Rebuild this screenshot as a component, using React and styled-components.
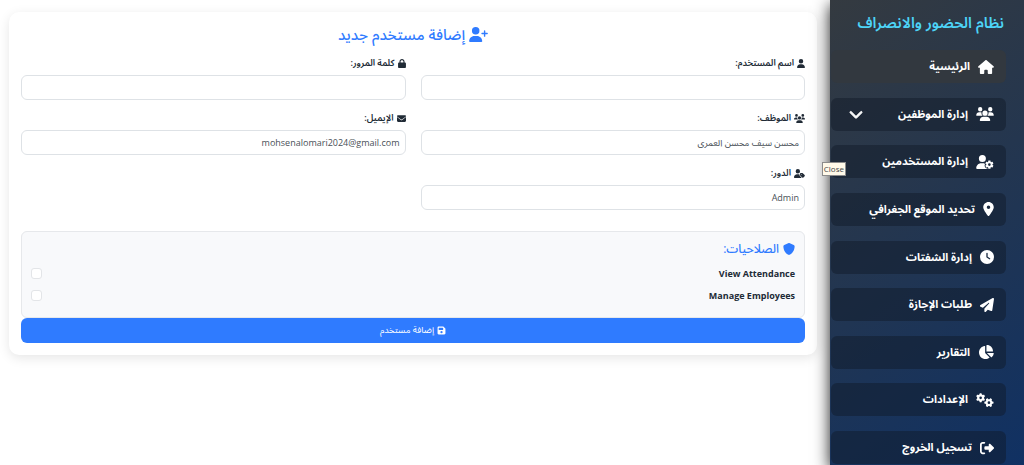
import React, { useState } from 'react';
import styled, { createGlobalStyle } from 'styled-components';
import {
  FaChartPie,
  FaChevronDown,
  FaClock,
  FaEnvelope,
  FaFloppyDisk,
  FaGears,
  FaHouse,
  FaLocationDot,
  FaLock,
  FaPaperPlane,
  FaRightFromBracket,
  FaShield,
  FaUser,
  FaUserGear,
  FaUserPlus,
  FaUserTag,
  FaUsers,
} from 'react-icons/fa6';

const GlobalStyle = createGlobalStyle`
  *, *::before, *::after {
    box-sizing: border-box;
  }

  body {
    margin: 0;
    background: #fff;
    color: #212b36;
    font-family: 'Open Sans', 'Noto Sans', 'Noto Sans Arabic', 'DejaVu Sans', sans-serif;
    font-size: 9px;
  }

  button, input, select {
    font-family: inherit;
  }
`;

const Page = styled.div`
  display: flex;
  min-height: 100vh;
  overflow: hidden;
`;

const IconBox = styled.span`
  display: flex;
  flex: none;
  width: ${({ $width }) => $width}px;
  height: ${({ $height }) => $height}px;

  svg {
    width: 100%;
    height: 100%;
  }
`;

const Sidebar = styled.aside`
  position: relative;
  display: flex;
  flex-direction: column;
  flex: 0 0 194px;
  min-width: 0;
  min-height: 100vh;
  padding: 0 18px 1px 1px;
  background: linear-gradient(145deg, #343a40 0%, #24364f 45%, #103163 100%);
  box-shadow: 0 5px 15px rgba(0, 0, 0, 0.9);
`;

const Brand = styled.h1`
  margin: 0 -18px 0 0;
  padding: 0 20px;
  color: #4dd4f7;
  font-size: 15px;
  font-weight: 600;
  line-height: 44px;
  white-space: nowrap;
`;

const Nav = styled.nav`
  display: flex;
  flex: 1;
  flex-direction: column;
  justify-content: space-between;
  padding-top: 6px;
`;

const NavLink = styled.a`
  display: flex;
  align-items: center;
  gap: 8px;
  height: 33px;
  padding: 0 12px;
  border-radius: 6px;
  background: ${({ $active }) => ($active ? '#32383f' : 'rgba(16, 24, 38, 0.45)')};
  color: #fff;
  font-size: 11px;
  font-weight: 700;
  text-decoration: none;
  white-space: nowrap;
`;

const NavArrow = styled(FaChevronDown)`
  width: 14px;
  height: 14px;
  margin-inline-start: auto;
  margin-inline-end: 6px;
  stroke: #fff;
  stroke-width: 30px;
`;

const Tooltip = styled.div`
  position: absolute;
  top: 162px;
  right: 178px;
  padding: 0 1px;
  border: 1px solid #8b8b8b;
  background: #fff9e9;
  color: #444;
  font-size: 8px;
  line-height: 12px;
`;

const Main = styled.main`
  flex: 1;
  min-width: 0;
  padding: 12px 13px 12px 9px;
`;

const Card = styled.form`
  padding: 12px;
  border-radius: 10px;
  background: #fff;
  box-shadow: 0 3px 12px rgba(0, 0, 0, 0.1);
`;

const Title = styled.h2`
  display: flex;
  align-items: center;
  justify-content: center;
  gap: 4px;
  margin: 0 0 13px;
  color: #2f7bff;
  font-size: 15px;
  font-weight: 500;
  line-height: 20px;
`;

const Fields = styled.div`
  display: grid;
  grid-template-columns: 1fr 1fr;
  gap: 12px 15px;
`;

const Label = styled.label`
  display: flex;
  align-items: center;
  gap: 3px;
  height: 12px;
  margin-bottom: 6px;
  font-size: 9px;
  font-weight: 600;
`;

const Input = styled.input`
  display: block;
  width: 100%;
  height: 25px;
  padding: 0 5px;
  border: 1px solid #dee2e6;
  border-radius: 6px;
  background: #fff;
  color: #495057;
  font-size: 9px;
  text-align: right;
  appearance: none;
`;

const Permissions = styled.fieldset`
  min-width: 0;
  margin: 21px 0 0;
  padding: 8px 9px 11px;
  border: 1px solid #e6e8eb;
  border-radius: 6px;
  background: #f8f9fb;
`;

const PermissionsTitle = styled.h3`
  display: flex;
  align-items: center;
  gap: 4px;
  margin: 0 0 4px;
  color: #2f7bff;
  font-size: 12px;
  font-weight: 500;
  line-height: 18px;
`;

const Permission = styled.label`
  display: flex;
  align-items: center;
  justify-content: space-between;
  height: 22px;
  font-size: 9px;
  font-weight: 700;
`;

const Checkbox = styled.input`
  width: 11px;
  height: 11px;
  margin: 0;
  border: 1px solid #e3e5e8;
  border-radius: 3px;
  background: #fff;
  appearance: none;

  &:checked {
    background: #2f7bff;
  }
`;

const SubmitButton = styled.button`
  display: flex;
  align-items: center;
  justify-content: center;
  gap: 3px;
  width: 100%;
  height: 25px;
  padding: 0;
  border: 0;
  border-radius: 6px;
  background: #2f7bff;
  color: #fff;
  font-size: 9px;
`;

const links = [
  { label: 'الرئيسية', icon: FaHouse, width: 16, active: true },
  { label: 'إدارة الموظفين', icon: FaUsers, width: 18, arrow: true },
  { label: 'إدارة المستخدمين', icon: FaUserGear, width: 18 },
  { label: 'تحديد الموقع الجغرافي', icon: FaLocationDot, width: 11 },
  { label: 'إدارة الشفتات', icon: FaClock, width: 14 },
  { label: 'طلبات الإجازة', icon: FaPaperPlane, width: 14 },
  { label: 'التقارير', icon: FaChartPie, width: 16 },
  { label: 'الإعدادات', icon: FaGears, width: 18 },
  { label: 'تسجيل الخروج', icon: FaRightFromBracket, width: 14 },
];

const permissions = ['View Attendance', 'Manage Employees'];

const Icon = ({ as: Glyph, width, height }) => (
  <IconBox $width={width} $height={height}>
    <Glyph />
  </IconBox>
);

const Field = ({ id, label, icon, iconWidth, children, ...rest }) => (
  <div>
    <Label htmlFor={id}>
      <Icon as={icon} width={iconWidth} height={9} />
      {label}
    </Label>
    {children ? (
      <Input as="select" id={id} {...rest}>
        {children}
      </Input>
    ) : (
      <Input id={id} {...rest} />
    )}
  </div>
);

const App = () => {
  const [email, setEmail] = useState('mohsenalomari2024@gmail.com');

  return (
    <Page dir="rtl" lang="ar">
      <GlobalStyle />
      <Sidebar>
        <Brand>نظام الحضور والانصراف</Brand>
        <Nav>
          {links.map(({ label, icon, width, active, arrow }) => (
            <NavLink key={label} href="#" $active={active}>
              <Icon as={icon} width={width} height={14} />
              {label}
              {arrow && <NavArrow />}
            </NavLink>
          ))}
        </Nav>
        <Tooltip role="tooltip">Close</Tooltip>
      </Sidebar>
      <Main>
        <Card onSubmit={(e) => e.preventDefault()}>
          <Title>
            <Icon as={FaUserPlus} width={19} height={15} />
            إضافة مستخدم جديد
          </Title>
          <Fields>
            <Field
              id="username"
              label="اسم المستخدم:"
              icon={FaUser}
              iconWidth={8}
            />
            <Field
              id="password"
              label="كلمة المرور:"
              icon={FaLock}
              iconWidth={8}
              type="password"
            />
            <Field
              id="employee"
              label="الموظف:"
              icon={FaUsers}
              iconWidth={11}>
              <option>محسن سيف محسن العمري</option>
            </Field>
            <Field
              id="email"
              label="الإيميل:"
              icon={FaEnvelope}
              iconWidth={9}
              type="email"
              value={email}
              onChange={(e) => setEmail(e.target.value)}
            />
            <Field id="role" label="الدور:" icon={FaUserTag} iconWidth={11}>
              <option>Admin</option>
            </Field>
          </Fields>
          <Permissions>
            <PermissionsTitle>
              <Icon as={FaShield} width={12} height={12} />
              الصلاحيات:
            </PermissionsTitle>
            {permissions.map((name) => (
              <Permission key={name}>
                {name}
                <Checkbox type="checkbox" />
              </Permission>
            ))}
          </Permissions>
          <SubmitButton type="submit">
            <Icon as={FaFloppyDisk} width={9} height={9} />
            إضافة مستخدم
          </SubmitButton>
        </Card>
      </Main>
    </Page>
  );
};

export default App;
